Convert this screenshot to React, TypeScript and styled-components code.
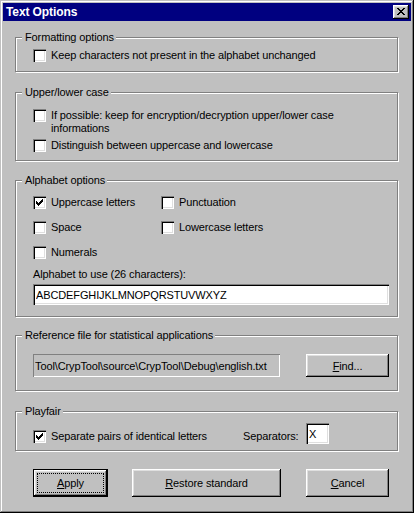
import React from 'react';
import styled, { createGlobalStyle } from 'styled-components';

const GlobalStyle = createGlobalStyle`
    html, body {
        margin: 0;
        padding: 0;
        background: #c0c0c0;
    }
    body {
        font-family: "Liberation Sans", Arial, sans-serif;
        font-size: 11px;
        letter-spacing: -0.12px;
        color: #000;
    }
`;

const Window = styled.div`
    width: 414px;
    height: 513px;
    box-sizing: border-box;
    padding: 3px;
    background: #c0c0c0;
    display: flex;
    flex-direction: column;
    box-shadow: inset -1px -1px #000, inset 1px 1px #c0c0c0, inset -2px -2px #808080, inset 2px 2px #fff;
`;

const TitleBar = styled.div`
    height: 18px;
    flex: none;
    background: #000080;
    color: #fff;
    display: flex;
    align-items: center;
    justify-content: space-between;
    padding: 0 2px 0 3px;
`;

const Title = styled.span`
    font-weight: bold;
    font-size: 12px;
    letter-spacing: -0.1px;
    line-height: 18px;
`;

const CloseButton = styled.div`
    width: 16px;
    height: 14px;
    box-sizing: border-box;
    padding: 3px 0 0 4px;
    background: #c0c0c0;
    box-shadow: inset -1px -1px #000, inset 1px 1px #fff, inset -2px -2px #808080, inset 2px 2px #dfdfdf;
    svg { display: block; }
`;

const Body = styled.div`
    padding: 16px 13px 0 12px;
    display: flex;
    flex-direction: column;
`;

const Group = styled.div<{ $h: number; $mt: number; $pt: number }>`
    position: relative;
    box-sizing: border-box;
    height: ${p => p.$h}px;
    margin-top: ${p => p.$mt}px;
    padding: ${p => p.$pt}px 0 0 17px;
    border: 1px solid #808080;
    box-shadow: inset 1px 1px #fff, 1px 1px #fff;
`;

const Legend = styled.span`
    position: absolute;
    top: -7px;
    left: 6px;
    padding: 0 2px 0 3px;
    line-height: 13px;
    background: #c0c0c0;
`;

const Row = styled.label<{ $mt?: number; $w?: number }>`
    display: flex;
    align-items: flex-start;
    gap: 5px;
    line-height: 13px;
    margin-top: ${p => p.$mt ?? 0}px;
    ${p => (p.$w ? `width: ${p.$w}px;` : '')}
    flex: none;
`;

const Box = styled.span`
    flex: none;
    width: 13px;
    height: 13px;
    box-sizing: border-box;
    padding: 3px;
    background: #fff;
    box-shadow: inset 1px 1px #808080, inset 2px 2px #000, inset -1px -1px #fff, inset -2px -2px #dfdfdf;
    svg { display: block; }
`;

const OptionGrid = styled.div`
    display: grid;
    grid-template-columns: 128px 128px;
    row-gap: 12px;
`;

const FieldLabel = styled.div`
    line-height: 13px;
    margin-top: 9px;
`;

const TextField = styled.input<{ $w: number; $mt?: number }>`
    display: block;
    width: ${p => p.$w}px;
    height: 21px;
    margin: ${p => p.$mt ?? 0}px 0 0;
    box-sizing: border-box;
    padding: 0 0 0 3px;
    border: 0;
    outline: none;
    background: #fff;
    font: inherit;
    letter-spacing: inherit;
    color: #000;
    box-shadow: inset 1px 1px #808080, inset 2px 2px #000, inset -1px -1px #fff, inset -2px -2px #dfdfdf;
`;

const FileRow = styled.div`
    display: flex;
    align-items: flex-start;
`;

const PathBox = styled.div`
    width: 247px;
    height: 23px;
    box-sizing: border-box;
    padding: 0 2px;
    display: flex;
    align-items: center;
    overflow: hidden;
    white-space: nowrap;
    box-shadow: inset 1px 1px #808080, inset -1px -1px #fff;
`;

const PlayfairRow = styled.div`
    display: flex;
    align-items: flex-start;
`;

const SepLabel = styled.span`
    width: 63px;
    line-height: 13px;
    flex: none;
`;

const ButtonBar = styled.div`
    display: flex;
    margin-top: 18px;
    padding-left: 18px;
`;

const Button = styled.div<{ $w: number; $h?: number; $ml?: number; $default?: boolean }>`
    position: relative;
    width: ${p => p.$w}px;
    height: ${p => p.$h ?? 28}px;
    margin-left: ${p => p.$ml ?? 0}px;
    flex: none;
    box-sizing: border-box;
    display: flex;
    align-items: center;
    justify-content: center;
    background: #c0c0c0;
    border: ${p => (p.$default ? '1px solid #000' : '0')};
    box-shadow: inset -1px -1px #000, inset 1px 1px #fff, inset -2px -2px #808080, inset 2px 2px #dfdfdf;
    ${p =>
        p.$default
            ? `&::after {
                content: '';
                position: absolute;
                inset: 3px;
                border: 1px dotted #000;
            }`
            : ''}
`;

const CLOSE = [
    'xx....xx',
    '.xx..xx.',
    '..xxxx..',
    '...xx...',
    '..xxxx..',
    '.xx..xx.',
    'xx....xx',
];

const TICK = [
    '......x',
    '.....xx',
    'x...xxx',
    'xx.xxx.',
    'xxxxx..',
    '.xxx...',
    '..x....',
];

const PixelGlyph = ({ rows }: { rows: string[] }) => (
    <svg width={rows[0].length} height={rows.length} shapeRendering="crispEdges">
        {rows.flatMap((r, y) =>
            r.split('').map((c, x) =>
                c === 'x' ? <rect key={`${x}-${y}`} x={x} y={y} width={1} height={1} fill="#000" /> : null
            )
        )}
    </svg>
);

type CheckProps = { label: React.ReactNode; checked?: boolean; mt?: number; w?: number };

const Check = ({ label, checked, mt, w }: CheckProps) => (
    <Row $mt={mt} $w={w}>
        <Box>{checked && <PixelGlyph rows={TICK} />}</Box>
        <span>{label}</span>
    </Row>
);

export default function App() {
    return (
        <>
            <GlobalStyle />
            <Window>
                <TitleBar>
                    <Title>Text Options</Title>
                    <CloseButton>
                        <PixelGlyph rows={CLOSE} />
                    </CloseButton>
                </TitleBar>
                <Body>
                    <Group $h={35} $mt={0} $pt={11}>
                        <Legend>Formatting options</Legend>
                        <Check label="Keep characters not present in the alphabet unchanged" />
                    </Group>

                    <Group $h={69} $mt={20} $pt={16}>
                        <Legend>Upper/lower case</Legend>
                        <Check w={330} label="If possible: keep for encryption/decryption upper/lower case informations" />
                        <Check mt={4} label="Distinguish between uppercase and lowercase" />
                    </Group>

                    <Group $h={137} $mt={19} $pt={15}>
                        <Legend>Alphabet options</Legend>
                        <OptionGrid>
                            <Check checked label="Uppercase letters" />
                            <Check label="Punctuation" />
                            <Check label="Space" />
                            <Check label="Lowercase letters" />
                            <Check label="Numerals" />
                        </OptionGrid>
                        <FieldLabel>Alphabet to use (26 characters):</FieldLabel>
                        <TextField $w={356} $mt={3} readOnly value="ABCDEFGHIJKLMNOPQRSTUVWXYZ" />
                    </Group>

                    <Group $h={56} $mt={18} $pt={18}>
                        <Legend>Reference file for statistical applications</Legend>
                        <FileRow>
                            <PathBox>Tool\CrypTool\source\CrypTool\Debug\english.txt</PathBox>
                            <Button $w={83} $h={23} $ml={26}>
                                <span>
                                    <u>F</u>ind...
                                </span>
                            </Button>
                        </FileRow>
                    </Group>

                    <Group $h={40} $mt={20} $pt={18}>
                        <Legend>Playfair</Legend>
                        <PlayfairRow>
                            <Check checked w={210} label="Separate pairs of identical letters" />
                            <SepLabel>Separators:</SepLabel>
                            <TextField $w={23} $mt={-7} readOnly value="X" />
                        </PlayfairRow>
                    </Group>

                    <ButtonBar>
                        <Button $w={75} $default>
                            <span>
                                <u>A</u>pply
                            </span>
                        </Button>
                        <Button $w={149} $ml={24}>
                            <span>
                                <u>R</u>estore standard
                            </span>
                        </Button>
                        <Button $w={83} $ml={25}>
                            <span>
                                <u>C</u>ancel
                            </span>
                        </Button>
                    </ButtonBar>
                </Body>
            </Window>
        </>
    );
}
